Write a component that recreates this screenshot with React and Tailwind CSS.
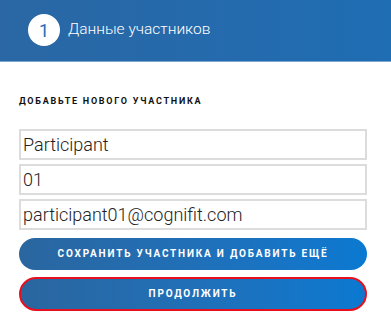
export default function App() {
  return (
    <div className="w-[391px] h-[322px] bg-white overflow-hidden" style={{ fontFamily: "Roboto, 'Noto Sans', sans-serif" }}>
      <div className="h-[62px] bg-gradient-to-r from-[#2a67a4] to-[#1f6db3] flex items-center pl-[28px] border-b border-[#7aa6d0]">
        <div className="w-[32px] h-[32px] rounded-full bg-white flex items-center justify-center text-[#1f6db3] text-[18px] mt-[-1px]">1</div>
        <div className="ml-[8px] text-white text-[15.5px] font-light mt-[-1px]">Данные участников</div>
      </div>
      <div className="px-[19px] pr-[24px]">
        <div className="mt-[33px] text-[9px] font-bold tracking-[1.75px] text-[#111]">ДОБАВЬТЕ НОВОГО УЧАСТНИКА</div>
        <div className="mt-[20px] flex flex-col gap-[4px]">
          <div className="h-[31px] border-2 border-[#dcdcdc] px-[2px] flex items-center text-[18px] font-light text-[#222]">Participant</div>
          <div className="h-[31px] border-2 border-[#dcdcdc] px-[2px] flex items-center text-[18px] font-light text-[#222]">01</div>
          <div className="h-[31px] border-2 border-[#dcdcdc] px-[2px] flex items-center text-[18px] font-light text-[#222]">participant01@cognifit.com</div>
        </div>
        <div className="mt-[8px] h-[32px] rounded-full bg-gradient-to-r from-[#2a669f] to-[#0a79d1] flex items-center justify-center text-white text-[10px] font-bold tracking-[1.8px]">СОХРАНИТЬ УЧАСТНИКА И ДОБАВИТЬ ЕЩЁ</div>
        <div className="mt-[7px] h-[34px] rounded-full border-2 border-[#e8101e] bg-gradient-to-r from-[#2a669f] to-[#0a79d1] flex items-center justify-center text-white text-[10px] font-bold tracking-[1.8px]">ПРОДОЛЖИТЬ</div>
      </div>
    </div>
  );
}
